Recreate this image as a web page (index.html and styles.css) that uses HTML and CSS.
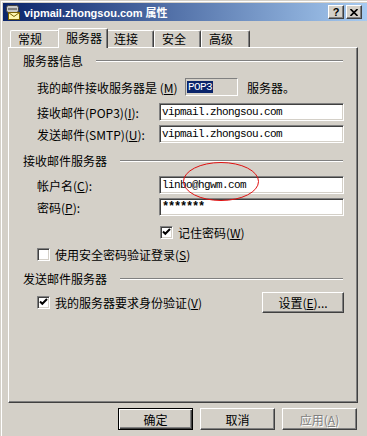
FILE: index.html
```html
<!DOCTYPE html>
<html>
<head>
<meta charset="utf-8">
<title>vipmail.zhongsou.com 属性</title>
<link rel="stylesheet" href="styles.css">
</head>
<body>
<div class="window">
    <div class="titleBar">
        <svg class="appIcon" width="16" height="16" viewBox="0 0 16 16">
            <rect x="1.5" y="1.5" width="12" height="7" rx="2" fill="#c8c8c8" stroke="#404040"/>
            <rect x="3" y="4" width="9" height="2" fill="#808080"/>
            <rect x="3.5" y="8.5" width="11" height="7" fill="#fff7b0" stroke="#7a6000"/>
            <path d="M3.5 8.5 L9 12.5 L14.5 8.5" fill="none" stroke="#7a6000"/>
        </svg>
        <span class="titleText">vipmail.zhongsou.com 属性</span>
        <div class="capButtons">
            <div class="capBut">?</div>
            <div class="capBut">
                <svg width="8" height="7" viewBox="0 0 8 7">
                    <path d="M0.5 0 L7.5 7 M7.5 0 L0.5 7" stroke="#000" stroke-width="1.6"/>
                </svg>
            </div>
        </div>
    </div>

    <div class="tabs">
        <div class="tab">常规</div>
        <div class="tab active">服务器</div>
        <div class="tab">连接</div>
        <div class="tab">安全</div>
        <div class="tab">高级</div>
    </div>

    <div class="panel">
        <div class="group first"><span>服务器信息</span><div class="etch"></div></div>

        <div class="row r1">
            <span class="label wide">我的邮件接收服务器是 (<u>M</u>)</span>
            <div class="pop3"><span class="sel">POP3</span></div>
            <span class="after">服务器。</span>
        </div>
        <div class="row r2">
            <span class="label">接收邮件(POP3)(<u>I</u>):</span>
            <div class="field">vipmail.zhongsou.com</div>
        </div>
        <div class="row r3">
            <span class="label">发送邮件(SMTP)(<u>U</u>):</span>
            <div class="field">vipmail.zhongsou.com</div>
        </div>

        <div class="group second"><span>接收邮件服务器</span><div class="etch"></div></div>

        <div class="row r4">
            <span class="label">帐户名(<u>C</u>):</span>
            <div class="field">linbo@hgwm.com</div>
        </div>
        <div class="row r5">
            <span class="label">密码(<u>P</u>):</span>
            <div class="field stars">*******</div>
        </div>
        <div class="row r6 indent">
            <div class="check"><svg width="9" height="9" viewBox="0 0 9 9"><path d="M1 3.5 L3.3 5.8 L8 1" fill="none" stroke="#000" stroke-width="2"/></svg></div>
            <span>记住密码(<u>W</u>)</span>
        </div>
        <div class="row r7">
            <div class="check"></div>
            <span>使用安全密码验证登录(<u>S</u>)</span>
        </div>

        <div class="group third"><span>发送邮件服务器</span><div class="etch"></div></div>

        <div class="row r8">
            <div class="check"><svg width="9" height="9" viewBox="0 0 9 9"><path d="M1 3.5 L3.3 5.8 L8 1" fill="none" stroke="#000" stroke-width="2"/></svg></div>
            <span>我的服务器要求身份验证(<u>V</u>)</span>
            <div class="btn setBut">设置(<u>E</u>)...</div>
        </div>
    </div>

    <div class="footer">
        <div class="btn default">确定</div>
        <div class="btn">取消</div>
        <div class="btn disabled">应用(<u>A</u>)</div>
    </div>
</div>

<svg class="mark" width="80" height="42" viewBox="0 0 80 42">
    <ellipse cx="39" cy="20.5" rx="37.5" ry="19" fill="none" stroke="#e01010" stroke-width="1"/>
</svg>
</body>
</html>
```

FILE: styles.css
```css
body {
    margin: 0;
    width: 367px;
    height: 436px;
    overflow: hidden;
    position: relative;
    background-color: #d4d0c8;
    font-family: "Noto Sans CJK SC", sans-serif;
    font-size: 12px;
    color: #000;
}

u {
    text-decoration: underline;
    text-underline-offset: 1px;
}

.window {
    height: 436px;
    box-sizing: border-box;
    border-left: 1px solid #d4d0c8;
    border-top: 1px solid #d4d0c8;
    padding: 2px 0 0 2px;
    box-shadow: inset 1px 1px #ffffff;
}

/* title bar */
.titleBar {
    height: 18px;
    display: flex;
    align-items: center;
    background: linear-gradient(to right, #0a246a, #a6caf0);
    color: #ffffff;
}

.appIcon {
    margin-left: 2px;
    flex: none;
}

.titleText {
    margin-left: 3px;
    font-family: "Liberation Sans", "Noto Sans CJK SC", sans-serif;
    font-weight: bold;
    font-size: 11px;
    flex: 1;
}

.capButtons {
    display: flex;
    gap: 2px;
    margin-right: 5px;
}

.capBut {
    width: 16px;
    height: 14px;
    box-sizing: border-box;
    background: #d4d0c8;
    border: 1px solid;
    border-color: #ffffff #404040 #404040 #ffffff;
    box-shadow: inset -1px -1px #808080;
    color: #000;
    font-family: "Liberation Sans", sans-serif;
    font-weight: bold;
    font-size: 11px;
    line-height: 12px;
    display: flex;
    align-items: center;
    justify-content: center;
}

/* tabs */
.tabs {
    display: flex;
    align-items: flex-end;
    height: 19px;
    margin-top: 7px;
    margin-left: 7px;
}

.tab {
    height: 17px;
    box-sizing: border-box;
    padding-left: 7px;
    line-height: 16px;
    border-top: 1px solid #ffffff;
    border-left: 1px solid #ffffff;
    border-right: 1px solid #404040;
    border-radius: 2px 2px 0 0;
    box-shadow: inset -1px 0 #808080;
    background: #d4d0c8;
}

.tab:nth-child(1) { width: 50px; }
.tab:nth-child(2) { width: 46px; }
.tab:nth-child(3) { width: 48px; }
.tab:nth-child(4) { width: 47px; }
.tab:nth-child(5) { width: 49px; }

.tab.active {
    width: 50px;
    height: 20px;
    margin: 0 -2px -1px -2px;
    padding-left: 7px;
    line-height: 18px;
    position: relative;
    z-index: 1;
}

/* panel */
.panel {
    margin-left: 5px;
    width: 350px;
    height: 356px;
    box-sizing: border-box;
    border: 1px solid;
    border-color: #ffffff #404040 #404040 #ffffff;
    box-shadow: inset -1px -1px #808080;
    padding: 0 13px 0 14px;
    display: flex;
    flex-direction: column;
}

.group {
    display: flex;
    align-items: center;
    height: 14px;
    line-height: 14px;
}

.group .etch {
    flex: 1;
    height: 0;
    border-top: 1px solid #808080;
    border-bottom: 1px solid #ffffff;
    margin-left: 13px;
    margin-right: 1px;
}

.group.first { margin-top: 6px; }
.group.second { margin-top: 11px; }
.group.third { margin-top: 11px; }

.row {
    display: flex;
    align-items: center;
    height: 18px;
    margin-left: 14px;
}

.r1 { margin-top: 10px; }
.r2 { margin-top: 7px; }
.r3 { margin-top: 4px; }
.r4 { margin-top: 8px; }
.r5 { margin-top: 4px; }
.r6 { margin-top: 9px; height: 14px; }
.r7 { margin-top: 8px; height: 14px; }
.r8 { margin-top: 6px; height: 20px; }

.indent {
    margin-left: 137px;
}

.label {
    width: 122px;
    flex: none;
    white-space: nowrap;
}

.label.wide {
    width: 148px;
}

.pop3 {
    width: 53px;
    height: 18px;
    box-sizing: border-box;
    border: 1px solid;
    border-color: #808080 #ffffff #ffffff #808080;
    padding: 2px 0 0 1px;
    font-family: "Liberation Mono", monospace;
    font-size: 11px;
    letter-spacing: -0.6px;
    line-height: 12px;
}

.pop3 .sel {
    background: #0a246a;
    color: #ffffff;
    padding: 0 1px 0 1px;
}

.after {
    margin-left: 9px;
}

.field {
    width: 185px;
    height: 18px;
    box-sizing: border-box;
    background: #ffffff;
    border: 1px solid;
    border-color: #808080 #ffffff #ffffff #808080;
    box-shadow: inset 1px 1px #404040, inset -1px -1px #d4d0c8;
    padding: 0 0 0 2px;
    font-family: "Liberation Mono", monospace;
    font-size: 11px;
    letter-spacing: -0.6px;
    line-height: 16px;
}

.field.stars {
    font-weight: bold;
    font-size: 12px;
    letter-spacing: -1.2px;
    line-height: 17px;
}

.check {
    width: 13px;
    height: 13px;
    box-sizing: border-box;
    flex: none;
    background: #ffffff;
    border: 1px solid;
    border-color: #808080 #ffffff #ffffff #808080;
    box-shadow: inset 1px 1px #404040, inset -1px -1px #d4d0c8;
    display: flex;
    align-items: center;
    justify-content: center;
    margin-right: 5px;
}

/* buttons */
.btn {
    width: 75px;
    height: 22px;
    box-sizing: border-box;
    border: 1px solid;
    border-color: #ffffff #404040 #404040 #ffffff;
    box-shadow: inset -1px -1px #808080;
    display: flex;
    align-items: center;
    justify-content: center;
    background: #d4d0c8;
}

.btn.default {
    border-color: #000000;
    box-shadow: inset 1px 1px #ffffff, inset -1px -1px #404040, inset -2px -2px #808080;
}

.btn.disabled {
    color: #808080;
    text-shadow: 1px 1px #ffffff;
}

.setBut {
    width: 82px;
    height: 21px;
    margin-left: auto;
}

.footer {
    display: flex;
    justify-content: flex-end;
    gap: 7px;
    margin-top: 5px;
    padding-right: 10px;
}

/* red annotation drawn over the account field */
.mark {
    position: absolute;
    left: 182px;
    top: 161px;
}
```
